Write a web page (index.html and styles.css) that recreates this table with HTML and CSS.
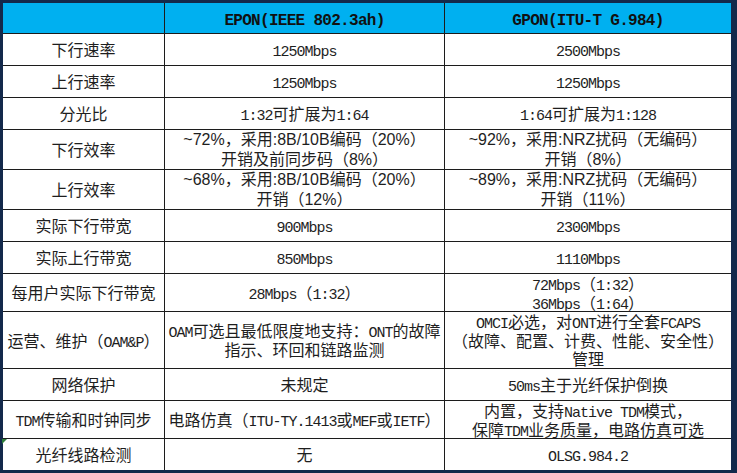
FILE: index.html
```html
<!DOCTYPE html>
<html lang="zh-CN">
<head>
<meta charset="utf-8">
<title>EPON vs GPON</title>
<link rel="stylesheet" href="styles.css">
</head>
<body>
<div class="frame">
  <div class="grid">
    <div class="c h"></div>
    <div class="c h"><p><span class="m">EPON(IEEE 802.3ah)</span></p></div>
    <div class="c h"><p><span class="m">GPON(ITU-T G.984)</span></p></div>

    <div class="c"><p>下行速率</p></div>
    <div class="c"><p><span class="m">1250Mbps</span></p></div>
    <div class="c"><p><span class="m">2500Mbps</span></p></div>

    <div class="c"><p>上行速率</p></div>
    <div class="c"><p><span class="m">1250Mbps</span></p></div>
    <div class="c"><p><span class="m">1250Mbps</span></p></div>

    <div class="c"><p>分光比</p></div>
    <div class="c"><p><span class="m">1:32</span>可扩展为<span class="m">1:64</span></p></div>
    <div class="c"><p><span class="m">1:64</span>可扩展为<span class="m">1:128</span></p></div>

    <div class="c"><p>下行效率</p></div>
    <div class="c s"><p>~72%，采用:8B/10B编码（20%）<br>开销及前同步码（8%）</p></div>
    <div class="c s"><p>~92%，采用:NRZ扰码（无编码）<br>开销（8%）</p></div>

    <div class="c"><p>上行效率</p></div>
    <div class="c s"><p>~68%，采用:8B/10B编码（20%）<br>开销（12%）</p></div>
    <div class="c s"><p>~89%，采用:NRZ扰码（无编码）<br>开销（11%）</p></div>

    <div class="c"><p>实际下行带宽</p></div>
    <div class="c"><p><span class="m">900Mbps</span></p></div>
    <div class="c"><p><span class="m">2300Mbps</span></p></div>

    <div class="c"><p>实际上行带宽</p></div>
    <div class="c"><p><span class="m">850Mbps</span></p></div>
    <div class="c"><p><span class="m">1110Mbps</span></p></div>

    <div class="c"><p>每用户实际下行带宽</p></div>
    <div class="c"><p><span class="m">28Mbps</span>（<span class="m">1:32</span>）</p></div>
    <div class="c"><p><span class="m">72Mbps</span>（<span class="m">1:32</span>）<br><span class="m">36Mbps</span>（<span class="m">1:64</span>）</p></div>

    <div class="c"><p>运营、维护（<span class="m">OAM&amp;P</span>）</p></div>
    <div class="c"><p><span class="m">OAM</span>可选且最低限度地支持：<span class="m">ONT</span>的故障<br>指示、环回和链路监测</p></div>
    <div class="c tight"><p><span class="m">OMCI</span>必选，对<span class="m">ONT</span>进行全套<span class="m">FCAPS</span><br>（故障、配置、计费、性能、安全性）<br>管理</p></div>

    <div class="c"><p>网络保护</p></div>
    <div class="c"><p>未规定</p></div>
    <div class="c"><p><span class="m">50ms</span>主于光纤保护倒换</p></div>

    <div class="c"><p><span class="m">TDM</span>传输和时钟同步</p></div>
    <div class="c"><p>电路仿真（<span class="m">ITU-TY.1413</span>或<span class="m">MEF</span>或<span class="m">IETF</span>）</p></div>
    <div class="c"><p>内置，支持<span class="m">Native TDM</span>模式，<br>保障<span class="m">TDM</span>业务质量，电路仿真可选</p></div>

    <div class="c"><p>光纤线路检测</p></div>
    <div class="c"><p>无</p></div>
    <div class="c"><p><span class="m">OLSG.984.2</span></p></div>
  </div>
  <div class="flag"></div>
</div>
</body>
</html>
```
FILE: styles.css
```css
html, body {
  margin: 0;
  padding: 0;
  background: #13294b;
}

.frame {
  position: relative;
  width: 737px;
  height: 473px;
  box-sizing: border-box;
  padding: 3px 6px 3px 3px;
  background: #13294b;
}

.grid {
  display: grid;
  grid-template-columns: 161px 279px 286px;
  grid-template-rows: 30px 31px 31px 31px 39px 39px 31px 31px 37px 56px 31px 37px 31px;
  gap: 1px;
  background: #1c1c1c;
}

.c {
  background: #ffffff;
  display: flex;
  align-items: center;
  justify-content: center;
  text-align: center;
  white-space: nowrap;
  font-family: "Noto Sans CJK SC", sans-serif;
  font-size: 16px;
  line-height: 19px;
  color: #1e1e1e;
}

.c p {
  margin: 0;
}

.tight {
  line-height: 18.5px;
}

.h {
  background: #00b0f0;
  font-weight: bold;
  color: #111;
}

.m {
  font-family: "Liberation Mono", "Noto Sans CJK SC", monospace;
  font-size: 15px;
  line-height: 0;
  letter-spacing: -1px;
}

.h .m {
  font-size: 16px;
  letter-spacing: -0.7px;
}

.s {
  font-family: "Liberation Sans", "Noto Sans CJK SC", sans-serif;
  line-height: 20px;
}

.flag {
  position: absolute;
  left: 2px;
  top: 439px;
  width: 0;
  height: 0;
  border-top: 5px solid #2f7d3a;
  border-right: 5px solid transparent;
}
```
